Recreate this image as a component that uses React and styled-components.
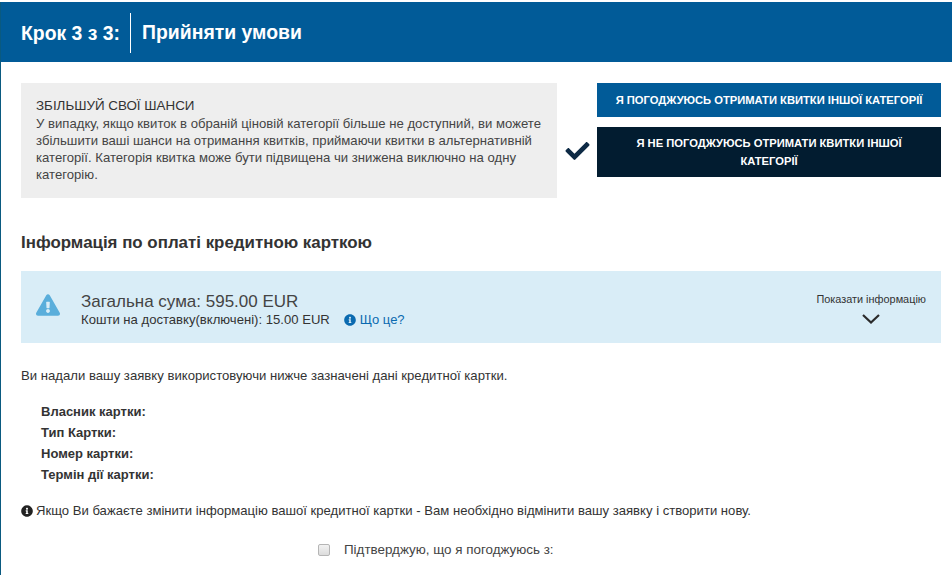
import React from "react";
import styled, { createGlobalStyle } from "styled-components";
import { FaCheck, FaExclamationTriangle, FaInfoCircle } from "react-icons/fa";

const GlobalStyle = createGlobalStyle`
  html, body {
    margin: 0;
    padding: 0;
    height: 575px;
    overflow: hidden;
    background: #fff;
    font-family: "Liberation Sans", Arial, sans-serif;
    color: #333;
  }
`;

const Page = styled.div`
  height: 573px;
  margin-top: 2px;
  border-left: 1px solid #0a5a80;
  box-sizing: border-box;
  overflow: hidden;
`;

const Header = styled.header`
  height: 60px;
  margin-left: -1px;
  padding-left: 21px;
  display: flex;
  align-items: center;
  background: #015b98;
  color: #fff;
  font-size: 19.4px;
  font-weight: bold;
`;

const HeaderStep = styled.span`
  height: 40px;
  line-height: 40px;
  margin-top: 1px;
  padding-right: 10px;
  border-right: 1px solid #fff;
  margin-right: 11px;
`;

const Content = styled.main`
  padding: 21px 11px 0 20px;
`;

const TopRow = styled.section`
  display: flex;
  align-items: flex-start;
`;

const ChanceBox = styled.div`
  width: 536px;
  height: 115px;
  box-sizing: border-box;
  padding: 15px 14px 0 15px;
  background: #eee;
  font-size: 13.15px;
  line-height: 17px;
  color: #444;
`;

const ChanceTitle = styled.div`
  font-size: 13.4px;
  color: #333;
  line-height: 15px;
  margin-bottom: 2px;
`;

const Choice = styled.div`
  position: relative;
  margin-left: 40px;
  width: 344px;
  display: flex;
  flex-direction: column;
  gap: 10px;
`;

const ChoiceButton = styled.button`
  display: block;
  width: 100%;
  height: ${(p) => (p.$selected ? "50px" : "34px")};
  border: 0;
  padding: 0 ${(p) => (p.$selected ? "20px" : "10px")};
  background: ${(p) => (p.$selected ? "#021c30" : "#015b98")};
  color: #fff;
  font-family: inherit;
  font-size: 11.2px;
  font-weight: bold;
  line-height: 18px;
  text-align: center;
`;

const ChosenMark = styled(FaCheck)`
  position: absolute;
  left: -33px;
  top: 56px;
  width: 27px;
  height: 24px;
  color: #0d2a45;
`;

const SectionTitle = styled.h2`
  margin: 35px 0 0;
  font-size: 16.9px;
  line-height: 20px;
  font-weight: bold;
  color: #333;
`;

const TotalBox = styled.section`
  margin-top: 18px;
  height: 72px;
  box-sizing: border-box;
  padding: 0 15px;
  display: flex;
  align-items: center;
  background: #d9edf7;
`;

const WarnIcon = styled(FaExclamationTriangle)`
  width: 24px;
  height: 22px;
  color: #5aaedb;
  margin-right: 21px;
  margin-bottom: 5px;
`;

const TotalText = styled.div`
  flex: 1;
  padding-top: 5px;
`;

const TotalSum = styled.div`
  font-size: 17px;
  line-height: 20px;
  color: #444;
`;

const Delivery = styled.div`
  font-size: 13.1px;
  line-height: 16px;
  color: #333;
  display: flex;
  align-items: center;
`;

const WhatLink = styled.a`
  margin-left: 14px;
  font-size: 13px;
  color: #0a6ab0;
  display: flex;
  align-items: center;
  gap: 4px;
`;

const LinkIcon = styled(FaInfoCircle)`
  width: 12px;
  height: 12px;
`;

const ShowInfo = styled.div`
  display: flex;
  flex-direction: column;
  align-items: center;
  margin-top: 2px;
  font-size: 10.9px;
  line-height: 14px;
  color: #333;
`;

const Chevron = styled.svg`
  width: 20px;
  height: 10px;
  margin-top: 8px;
  fill: none;
  stroke: #2b2b2b;
  stroke-width: 2.2;
`;

const Intro = styled.p`
  margin: 25px 0 0;
  font-size: 13.15px;
  line-height: 16px;
  color: #333;
`;

const CardList = styled.dl`
  margin: 17px 0 0 20px;
  font-size: 13px;
  line-height: 21px;
  font-weight: bold;
  color: #333;
`;

const CardLabel = styled.dt`
  margin: 0;
`;

const Notice = styled.p`
  margin: 18px 0 0;
  font-size: 13.1px;
  line-height: 16px;
  color: #333;
  display: flex;
  align-items: center;
  gap: 3px;
  white-space: nowrap;
`;

const NoticeIcon = styled(FaInfoCircle)`
  width: 12px;
  height: 12px;
  color: #222;
`;

const Confirm = styled.label`
  margin: 23px 0 0 297px;
  display: flex;
  align-items: center;
  font-size: 13.4px;
  line-height: 16px;
  color: #444;
`;

const ConfirmBox = styled.span`
  width: 10px;
  height: 10px;
  border: 1px solid #b5b5b5;
  border-radius: 2px;
  background: linear-gradient(#f2f2f2, #dcdcdc);
  margin-right: 14px;
`;

const cardLabels = ["Власник картки:", "Тип Картки:", "Номер картки:", "Термін дії картки:"];

export default function App() {
  return (
    <>
      <GlobalStyle />
      <Page>
        <Header>
          <HeaderStep>Крок 3 з 3:</HeaderStep>
          <span>Прийняти умови</span>
        </Header>
        <Content>
          <TopRow>
            <ChanceBox>
              <ChanceTitle>ЗБІЛЬШУЙ СВОЇ ШАНСИ</ChanceTitle>
              У випадку, якщо квиток в обраній ціновій категорії більше не доступний, ви можете
              збільшити ваші шанси на отримання квитків, приймаючи квитки в альтернативній
              категорії. Категорія квитка може бути підвищена чи знижена виключно на одну
              категорію.
            </ChanceBox>
            <Choice>
              <ChoiceButton>Я ПОГОДЖУЮСЬ ОТРИМАТИ КВИТКИ ІНШОЇ КАТЕГОРІЇ</ChoiceButton>
              <ChoiceButton $selected>Я НЕ ПОГОДЖУЮСЬ ОТРИМАТИ КВИТКИ ІНШОЇ КАТЕГОРІЇ</ChoiceButton>
              <ChosenMark />
            </Choice>
          </TopRow>
          <SectionTitle>Інформація по оплаті кредитною карткою</SectionTitle>
          <TotalBox>
            <WarnIcon />
            <TotalText>
              <TotalSum>Загальна сума: 595.00 EUR</TotalSum>
              <Delivery>
                Кошти на доставку(включені): 15.00 EUR
                <WhatLink>
                  <LinkIcon />
                  Що це?
                </WhatLink>
              </Delivery>
            </TotalText>
            <ShowInfo>
              Показати інформацію
              <Chevron viewBox="0 0 20 10">
                <polyline points="2,1 10,8.5 18,1" />
              </Chevron>
            </ShowInfo>
          </TotalBox>
          <Intro>Ви надали вашу заявку використовуючи нижче зазначені дані кредитної картки.</Intro>
          <CardList>
            {cardLabels.map((label) => (
              <CardLabel key={label}>{label}</CardLabel>
            ))}
          </CardList>
          <Notice>
            <NoticeIcon />
            Якщо Ви бажаєте змінити інформацію вашої кредитної картки - Вам необхідно відмінити вашу заявку і створити нову.
          </Notice>
          <Confirm>
            <ConfirmBox />
            Підтверджую, що я погоджуюсь з:
          </Confirm>
        </Content>
      </Page>
    </>
  );
}
